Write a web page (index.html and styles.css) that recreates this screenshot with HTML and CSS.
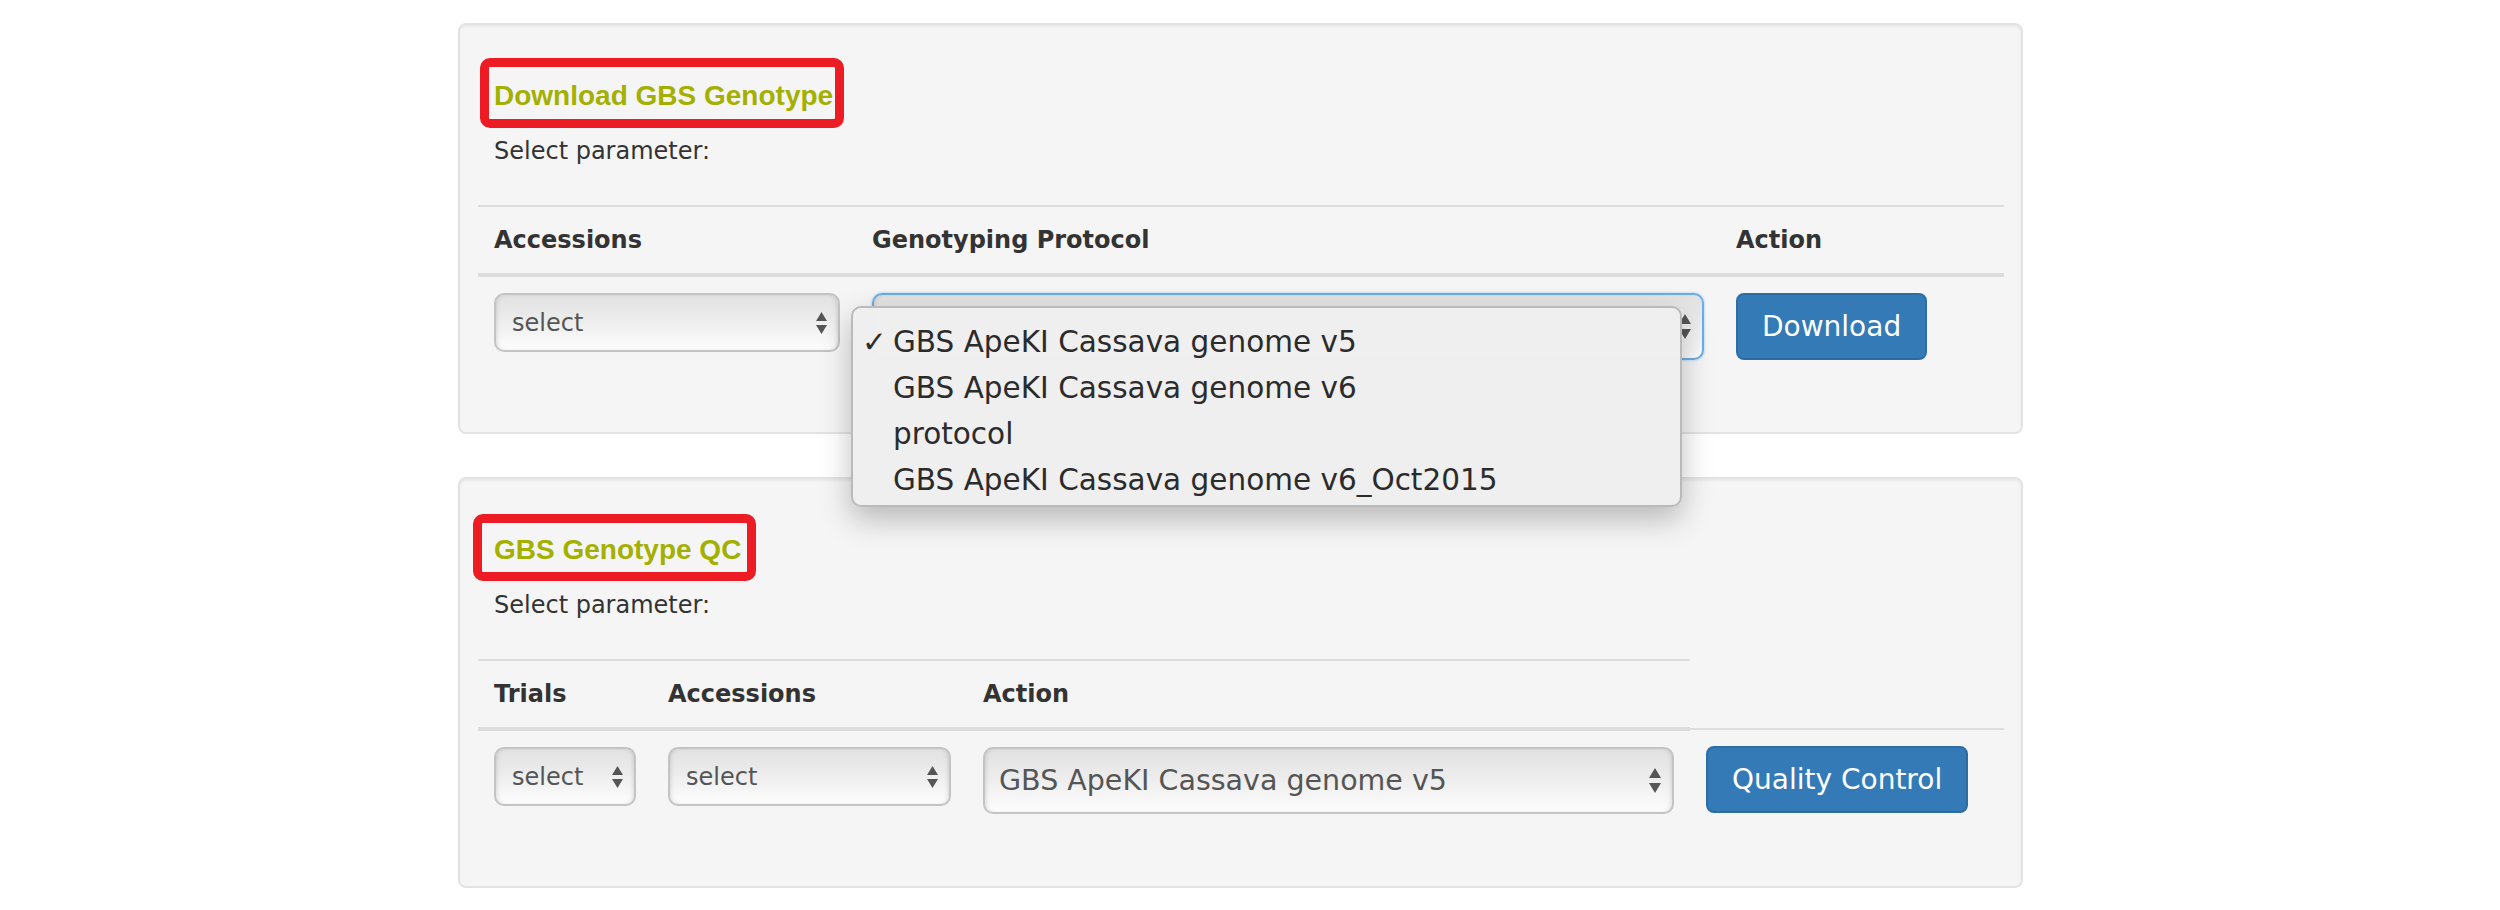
FILE: index.html
```html
<!DOCTYPE html>
<html>
<head>
<meta charset="utf-8">
<link rel="stylesheet" href="styles.css">
</head>
<body>
<div class="page">
  <div class="well">
    <h4 class="title t1"><span>Download GBS Genotype</span></h4>
    <p class="param">Select parameter:</p>
    <table class="tbl">
      <colgroup><col class="w378"><col class="w864"><col class="w284"></colgroup>
      <thead>
        <tr><th>Accessions</th><th>Genotyping Protocol</th><th>Action</th></tr>
      </thead>
      <tbody>
        <tr>
          <td>
            <div class="sel sm"><span>select</span>
              <svg class="arr" width="11" height="22" viewBox="0 0 11 22"><path d="M0 9 L5.5 0 L11 9 Z M0 13 L11 13 L5.5 22 Z"/></svg>
            </div>
          </td>
          <td>
            <div class="dd">
              <div class="sel lg focus"><span></span>
                <svg class="arr" width="12" height="25" viewBox="0 0 12 25"><path d="M0 10 L6 0 L12 10 Z M0 15 L12 15 L6 25 Z"/></svg>
              </div>
              <div class="menu">
                <div class="opt"><span class="chk">✓</span><span>GBS ApeKI Cassava genome v5</span></div>
                <div class="opt"><span class="chk"></span><span>GBS ApeKI Cassava genome v6</span></div>
                <div class="opt"><span class="chk"></span><span>protocol</span></div>
                <div class="opt"><span class="chk"></span><span>GBS ApeKI Cassava genome v6_Oct2015</span></div>
              </div>
            </div>
          </td>
          <td><button class="btn">Download</button></td>
        </tr>
      </tbody>
    </table>
  </div>

  <div class="well">
    <h4 class="title t2"><span>GBS Genotype QC</span></h4>
    <p class="param">Select parameter:</p>
    <table class="tbl">
      <colgroup><col class="w174"><col class="w315"><col class="w723"><col class="w314"></colgroup>
      <thead>
        <tr><th>Trials</th><th>Accessions</th><th>Action</th></tr>
      </thead>
      <tbody>
        <tr>
          <td>
            <div class="sel sm"><span>select</span>
              <svg class="arr" width="11" height="22" viewBox="0 0 11 22"><path d="M0 9 L5.5 0 L11 9 Z M0 13 L11 13 L5.5 22 Z"/></svg>
            </div>
          </td>
          <td>
            <div class="sel sm"><span>select</span>
              <svg class="arr" width="11" height="22" viewBox="0 0 11 22"><path d="M0 9 L5.5 0 L11 9 Z M0 13 L11 13 L5.5 22 Z"/></svg>
            </div>
          </td>
          <td>
            <div class="sel lg"><span>GBS ApeKI Cassava genome v5</span>
              <svg class="arr" width="12" height="25" viewBox="0 0 12 25"><path d="M0 10 L6 0 L12 10 Z M0 15 L12 15 L6 25 Z"/></svg>
            </div>
          </td>
          <td><button class="btn">Quality Control</button></td>
        </tr>
      </tbody>
    </table>
  </div>
</div>
</body>
</html>
```
FILE: styles.css
```css
* { box-sizing: border-box; }

body {
  margin: 0;
  background: #fff;
  font-family: "DejaVu Sans", Verdana, sans-serif;
  font-size: 24px;
  color: #333;
}

.page {
  display: flex;
  flex-direction: column;
  align-items: flex-start;
  gap: 43px;
  padding: 23px 0 0 458px;
}

.well {
  width: 1565px;
  height: 411px;
  background: #f5f5f5;
  border: 2px solid #e3e3e3;
  border-radius: 8px;
  box-shadow: inset 0 2px 2px rgba(0, 0, 0, 0.05);
  padding: 51px 17px 0 18px;
}

.title {
  margin: 0 0 0 16px;
  font-family: "Liberation Sans", Arial, sans-serif;
  font-weight: bold;
  font-size: 28px;
  line-height: 40px;
  color: #a4b000;
}

.title span {
  position: relative;
  display: inline-block;
}

.title span::after {
  content: "";
  position: absolute;
  border: 9px solid #ed1c24;
  border-radius: 10px;
}

.t1 span::after { top: -18px; bottom: -12px; left: -14px; right: -11px; }
.t2 span::after { top: -16px; bottom: -11px; left: -21px; right: -15px; }

.param {
  margin: 18px 0 0 16px;
  line-height: 34px;
}

.tbl {
  margin-top: 37px;
  width: 1526px;
  border-collapse: collapse;
  table-layout: fixed;
}

.w378 { width: 378px; }
.w864 { width: 864px; }
.w284 { width: 284px; }
.w174 { width: 174px; }
.w315 { width: 315px; }
.w723 { width: 723px; }
.w314 { width: 314px; }

.tbl th,
.tbl td {
  padding: 16px;
  line-height: 34px;
  text-align: left;
  vertical-align: top;
  border-top: 2px solid #ddd;
}

.tbl th {
  font-weight: bold;
  vertical-align: bottom;
  border-bottom: 4px solid #ddd;
}

.sel {
  display: flex;
  align-items: center;
  width: 100%;
  white-space: nowrap;
  overflow: hidden;
  border: 2px solid #c4c4c4;
  border-radius: 10px;
  background: linear-gradient(#e1e1e1, #eeeeee 50%, #fdfdfd);
  box-shadow: inset 3px 0 4px -2px rgba(0, 0, 0, 0.12), inset -3px 0 4px -2px rgba(0, 0, 0, 0.12);
  color: #555;
}

.sel.sm {
  height: 59px;
  padding: 0 11px 0 16px;
  font-size: 24px;
  line-height: 34px;
}

.sel.lg {
  height: 67px;
  padding: 0 11px 0 14px;
  font-size: 28.5px;
  line-height: 40px;
}

.sel.focus {
  border-color: #6aaee6;
  box-shadow: 0 0 3px rgba(102, 175, 233, 0.6), inset 3px 0 4px -2px rgba(0, 0, 0, 0.12);
}

.sel .arr {
  margin-left: auto;
  flex: none;
  fill: #555;
}

.dd { position: relative; }

.menu {
  position: absolute;
  left: -21px;
  top: 13px;
  z-index: 10;
  width: 831px;
  height: 201px;
  padding: 11px 0 0 9px;
  background: rgba(239, 239, 239, 0.98);
  border: 2px solid #bababa;
  border-radius: 10px;
  box-shadow: 0 12px 30px rgba(0, 0, 0, 0.25);
  font-size: 29.5px;
  color: #2b2b2b;
}

.opt {
  display: flex;
  height: 46px;
  line-height: 46px;
  white-space: nowrap;
}

.chk { width: 31px; flex: none; font-weight: bold; }

.btn {
  height: 67px;
  padding: 0 24px;
  background: #337ab7;
  border: 2px solid #2e6da4;
  border-radius: 8px;
  color: #fff;
  font-family: "DejaVu Sans", Verdana, sans-serif;
  font-size: 28px;
  line-height: 63px;
}
```
